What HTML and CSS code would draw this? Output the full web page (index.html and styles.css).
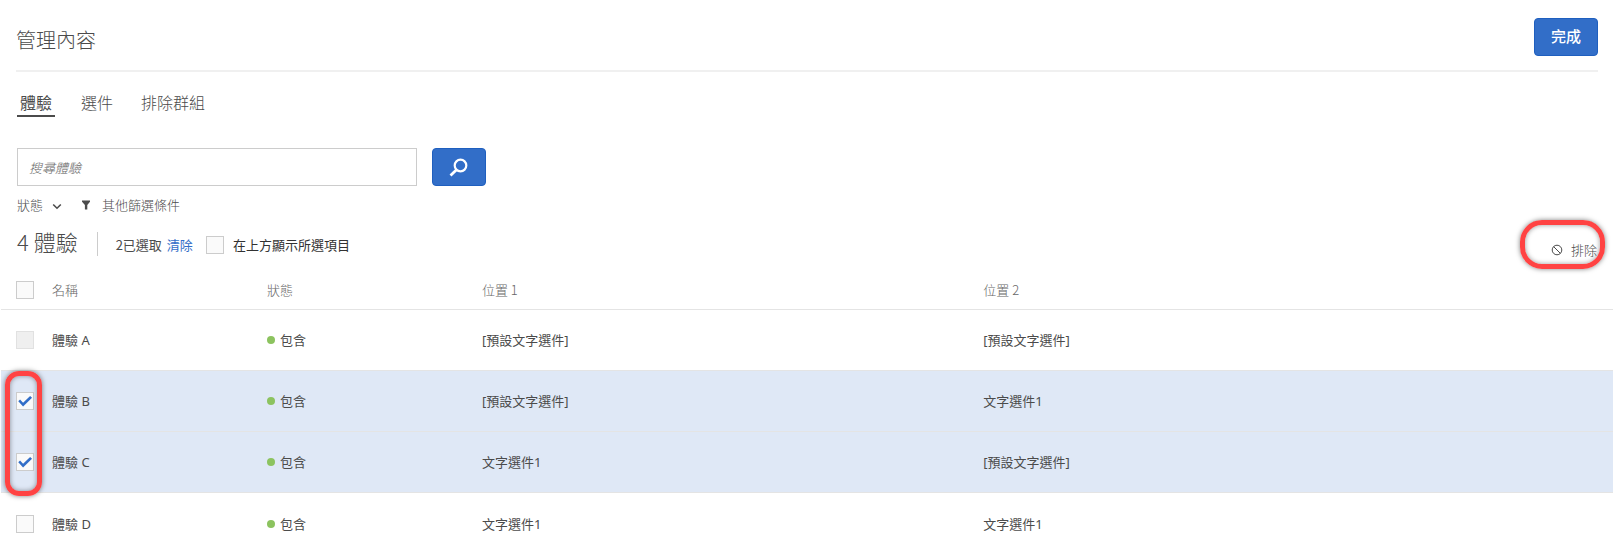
FILE: index.html
```html
<!DOCTYPE html>
<html lang="zh-Hant">
<head>
<meta charset="utf-8">
<title>管理內容</title>
<link rel="stylesheet" href="styles.css">
</head>
<body>
<header class="header">
  <h1 class="title">管理內容</h1>
  <button class="btn btn-done" type="button">完成</button>
</header>
<nav class="tabs">
  <a class="tab tab-active" href="#experiences">體驗</a>
  <a class="tab" href="#offers">選件</a>
  <a class="tab" href="#exclusions">排除群組</a>
</nav>
<form class="search">
  <input class="search-input" type="text" placeholder="搜尋體驗" aria-label="搜尋體驗">
  <button class="btn btn-search" type="button" aria-label="搜尋">
    <svg width="20" height="20" viewBox="0 0 20 20" fill="none" stroke="#fff"><circle cx="11.500" cy="8.500" r="5.800" stroke-width="2.200"/><path d="M7.500 12.800 1.500 18.500" stroke-width="2.800"/></svg>
  </button>
</form>
<div class="filters">
  <button class="filter" type="button">狀態
    <svg class="chevron" width="10" height="10" viewBox="0 0 10 10" fill="none" stroke="#4b4b4b" stroke-width="1.600"><path d="M1.200 3.500 5 7.200 8.800 3.500"/></svg>
  </button>
  <button class="filter filter-more" type="button">
    <svg width="8" height="10" viewBox="0 0 8 10" fill="#4b4b4b"><path d="M0 .5h8v1.300L5.300 5v4.500H2.900V5L0 1.800z"/></svg>
    其他篩選條件
  </button>
</div>
<section class="toolbar">
  <h2 class="count">4 體驗</h2>
  <div class="selection">
    <span>2已選取</span>
    <a class="clear" href="#clear">清除</a>
  </div>
  <label class="show-top"><input class="check" type="checkbox">在上方顯示所選項目</label>
  <div class="exclude-wrap">
    <button class="exclude" type="button">
      <svg width="12" height="12" viewBox="0 0 12 12" fill="none" stroke="#4b4b4b"><circle cx="6" cy="6" r="4.800"/><path d="M2.600 2.600 9.400 9.400"/></svg>
      排除
    </button>
    <span class="mark mark-exclude"></span>
  </div>
</section>
<table class="grid">
  <colgroup><col class="col-check"><col class="col-name"><col class="col-status"><col class="col-first"><col></colgroup>
  <thead>
    <tr><th><input class="check" type="checkbox" aria-label="全選"></th><th>名稱</th><th>狀態</th><th>位置 1</th><th>位置 2</th></tr>
  </thead>
  <tbody>
    <tr><td><input class="check" type="checkbox" aria-label="體驗 A" disabled></td><td>體驗 A</td><td><span class="status">包含</span></td><td>[預設文字選件]</td><td>[預設文字選件]</td></tr>
    <tr class="selected"><td class="marked"><input class="check" type="checkbox" aria-label="體驗 B" checked><span class="mark mark-checks"></span></td><td>體驗 B</td><td><span class="status">包含</span></td><td>[預設文字選件]</td><td>文字選件1</td></tr>
    <tr class="selected"><td><input class="check" type="checkbox" aria-label="體驗 C" checked></td><td>體驗 C</td><td><span class="status">包含</span></td><td>文字選件1</td><td>[預設文字選件]</td></tr>
    <tr><td><input class="check" type="checkbox" aria-label="體驗 D"></td><td>體驗 D</td><td><span class="status">包含</span></td><td>文字選件1</td><td>文字選件1</td></tr>
  </tbody>
</table>
</body>
</html>
```
FILE: styles.css
```css
* { box-sizing: border-box; }

body {
  margin: 0;
  background: #fff;
  color: #4b4b4b;
  font: 300 13px/20px "Noto Sans CJK TC", "Noto Sans", sans-serif;
}

button, input { font: inherit; color: inherit; }
button { cursor: pointer; }
a { text-decoration: none; color: inherit; }

.header {
  display: flex;
  align-items: flex-start;
  justify-content: space-between;
  margin: 0 15px 0 16px;
  padding: 18px 0 14px;
  border-bottom: 2px solid #f0f0f0;
}

.title {
  margin: 8px 0 0;
  font-size: 20px;
  line-height: 28px;
  font-weight: 300;
}

.btn {
  height: 38px;
  border: 1px solid #1f5fbf;
  border-radius: 4px;
  background: #326ec8;
  color: #fff;
}

.btn-done {
  width: 64px;
  padding: 0 0 2px;
  font-size: 15px;
  font-weight: 500;
}

.tabs {
  display: flex;
  gap: 24px;
  padding: 18px 17px 0;
  font-size: 16px;
  line-height: 25px;
}

.tab { padding: 0 2px; border-bottom: 2px solid transparent; }
.tab-active { padding: 0 3px; border-color: #4b4b4b; font-weight: 400; }

.search {
  display: flex;
  gap: 15px;
  padding: 31px 17px 0;
}

.search-input {
  width: 400px;
  height: 38px;
  padding: 0 11px;
  border: 1px solid #ccc;
  background: #fff;
}

.search-input::placeholder { color: #666; font-style: italic; opacity: 1; }

.btn-search {
  display: flex;
  align-items: center;
  justify-content: center;
  width: 54px;
  padding: 0;
}

.filters {
  display: flex;
  gap: 20px;
  padding: 9px 17px 0;
}

.filter {
  display: flex;
  align-items: center;
  gap: 9px;
  padding: 0;
  border: 0;
  background: none;
}

.filter-more { gap: 12px; }
.chevron { margin-top: 2px; }

.toolbar {
  display: flex;
  align-items: flex-start;
  padding: 16px 16px 0 17px;
}

.count {
  margin: 1px 0 0;
  padding: 0 19px 6px 0;
  border-right: 1px solid #ccc;
  font-size: 22px;
  line-height: 18px;
  font-weight: 300;
}

.selection {
  display: flex;
  gap: 5px;
  margin-top: 4px;
  padding: 0 13px 0 18px;
  font-weight: 400;
}

.clear { color: #326ec8; }

.show-top {
  display: flex;
  align-items: center;
  gap: 9px;
  margin-top: 4px;
  color: #323232;
  font-weight: 400;
}

.check {
  appearance: none;
  display: block;
  width: 18px;
  height: 18px;
  margin: 0;
  border: 1px solid #ccc;
  background: #fafafa;
}

.check:disabled { border-color: #e1e1e1; background: #efefef; }

.check:checked::after {
  content: "";
  display: block;
  width: 16px;
  height: 16px;
  background: #326ec8;
  clip-path: polygon(8% 51%, 19% 41%, 38% 61%, 82% 18%, 94% 29%, 38% 84%);
}

.exclude-wrap {
  position: relative;
  margin-top: 9px;
  margin-left: auto;
}

.exclude {
  display: flex;
  align-items: center;
  gap: 8px;
  padding: 0;
  border: 0;
  background: none;
}

.mark {
  position: absolute;
  z-index: 1;
  border: 5px solid #ff4343;
  box-shadow: 0 0 5px rgba(0, 0, 0, .5), inset 0 0 5px rgba(0, 0, 0, .4);
  pointer-events: none;
}

.mark-exclude { inset: -20px -8px -9px -31px; border-radius: 22px; }
.mark-checks { top: 0; left: 4px; width: 37px; height: 125px; border-radius: 14px; }

.grid {
  width: calc(100% - 1px);
  margin: 11px 0 0 1px;
  border-collapse: separate;
  border-spacing: 0;
  table-layout: fixed;
}

.col-check { width: 51px; }
.col-name, .col-status { width: 215px; }
.col-first { width: 31.1%; }

th, td {
  height: 61px;
  padding: 0;
  border-bottom: 1px solid #e4e4e4;
  text-align: left;
  vertical-align: middle;
}

th { height: 39px; font-weight: 300; color: #666; }
td { font-family: "Noto Sans", "Noto Sans CJK TC", sans-serif; font-weight: 400; }
tr > :first-child { padding-left: 15px; }
tbody tr:last-child td { border-bottom: 0; }
.selected td { background: #dfe8f6; }
.marked { position: relative; }

.status {
  display: flex;
  align-items: center;
  gap: 5px;
}

.status::before {
  content: "";
  width: 8px;
  height: 8px;
  border-radius: 50%;
  background: #8cc35f;
}
```
